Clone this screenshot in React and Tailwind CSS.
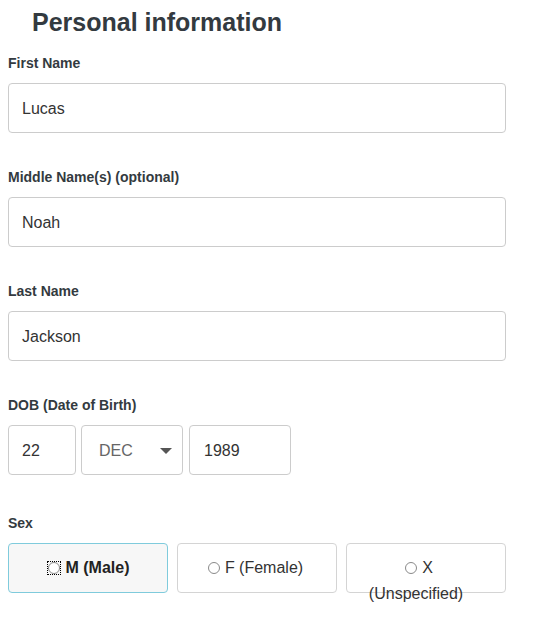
export default function App() {
  const font = { fontFamily: '"Liberation Sans", Arial, sans-serif' };
  const Radio = ({ focus }) =>
    focus ? (
      <span className="inline-flex items-center justify-center border border-dotted border-black w-[14px] h-[14px] mr-[5px]">
        <span className="block w-3 h-3 rounded-full border border-[#8a8a8a] bg-white" />
      </span>
    ) : (
      <span className="inline-block align-[-1px] w-3 h-3 rounded-full border border-[#8a8a8a] bg-white mr-[5px]" />
    );
  const Field = ({ label, value }) => (
    <div className="flex flex-col">
      <label className="text-[14px] leading-[20px] font-bold text-[#333a40]">{label}</label>
      <div className="mt-[10px] w-[498px] h-[50px] rounded border border-[#cccccc] bg-white flex items-center pl-[13px] pt-px text-[16px] text-[#333]">
        {value}
      </div>
    </div>
  );
  return (
    <div style={font} className="w-[536px] h-[627px] bg-white pl-2 pt-2">
      <h1 className="ml-6 text-[25px] leading-[29px] font-bold text-[#333a40]">Personal information</h1>
      <div className="mt-4 flex flex-col gap-[34px]">
        <Field label="First Name" value="Lucas" />
        <Field label="Middle Name(s) (optional)" value="Noah" />
        <Field label="Last Name" value="Jackson" />
        <div className="flex flex-col">
          <label className="text-[14px] leading-[20px] font-bold text-[#333a40]">DOB (Date of Birth)</label>
          <div className="mt-[10px] flex">
            <div className="w-[68px] h-[50px] rounded border border-[#cccccc] flex items-center pl-[13px] pt-px text-[16px] text-[#333]">22</div>
            <div className="ml-[5px] w-[102px] h-[50px] rounded border border-[#cccccc] flex items-center justify-between pl-[17px] pr-[10px] pt-px text-[16px] text-[#666]">
              <span>DEC</span>
              <svg width="12" height="6" viewBox="0 0 12 6"><path d="M0 0 L12 0 L6 6 Z" fill="#555" /></svg>
            </div>
            <div className="ml-[6px] w-[102px] h-[50px] rounded border border-[#cccccc] flex items-center pl-[14px] pt-px text-[16px] text-[#333]">1989</div>
          </div>
        </div>
      </div>
      <div className="mt-[38px] flex flex-col">
        <label className="text-[14px] leading-[20px] font-bold text-[#333a40]">Sex</label>
        <div className="mt-[10px] flex gap-[9px]">
          <div className="w-[160px] h-[50px] rounded border border-[#7fcbdc] bg-[#f7f7f7] pt-[11px] text-center text-[16px] leading-[26px] font-bold text-[#222]">
            <span className="inline-flex items-center"><Radio focus />M (Male)</span>
          </div>
          <div className="w-[160px] h-[50px] rounded border border-[#d4d4d4] bg-white pt-[11px] pr-[3px] text-center text-[16px] leading-[26px] text-[#333]">
            <Radio />F (Female)
          </div>
          <div className="w-[160px] h-[50px] rounded border border-[#d4d4d4] bg-white pt-[11px] text-center text-[16px] leading-[26px] text-[#333]">
            <span className="block pr-[14px]"><Radio />X</span>
            <span className="block pr-[20px]">(Unspecified)</span>
          </div>
        </div>
      </div>
    </div>
  );
}
